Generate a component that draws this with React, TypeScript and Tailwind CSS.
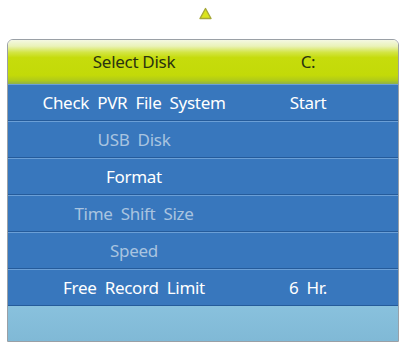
import React from "react";

type Row = { label: string; value?: string; dim?: boolean };

const rows: Row[] = [
  { label: "Check PVR File System", value: "Start" },
  { label: "USB Disk", dim: true },
  { label: "Format" },
  { label: "Time Shift Size", dim: true },
  { label: "Speed", dim: true },
  { label: "Free Record Limit", value: "6 Hr." },
];

function MenuRow({ label, value, dim }: Row) {
  return (
    <div className="flex h-[37px] items-center border-t border-t-[#6b9fd6] border-b border-b-[#255b9a] bg-[#3877bd]">
      <div
        className={`w-[252px] text-center ${dim ? "text-[#a9c4e0]" : "text-white"}`}
      >
        {label}
      </div>
      <div className="w-[96px] text-center text-white">{value}</div>
    </div>
  );
}

export default function App() {
  return (
    <div
      className="w-[406px] h-[345px] bg-white overflow-hidden text-[17px] tracking-[-0.3px] [word-spacing:4px]"
      style={{ fontFamily: '"Noto Sans", "Open Sans", sans-serif' }}
    >
      {/* up arrow */}
      <div className="flex h-[39px] justify-center pt-[7px] pl-[4px]">
        <svg width="13" height="13" viewBox="0 0 13 13">
          <path
            d="M6.5 1.5 L12 11.5 L1 11.5 Z"
            fill="#dbe41c"
            stroke="#a6a838"
            strokeWidth="1.4"
            strokeLinejoin="round"
          />
        </svg>
      </div>

      <div className="ml-[7px] w-[392px] rounded-t-[6px] border border-[#9aa0a6] overflow-hidden">
        <div className="flex h-[44px] items-center bg-[linear-gradient(to_bottom,#f4f8e2_0%,#eaf2b8_14%,#d3e545_28%,#c6dc0c_40%,#c3da08_80%,#b0ca1a_92%,#8db04c_100%)] text-[#2a3310] [word-spacing:0px]">
          <div className="w-[252px] text-center">Select Disk</div>
          <div className="w-[96px] text-center">C:</div>
        </div>
        {rows.map((r) => (
          <MenuRow key={r.label} {...r} />
        ))}
        <div className="h-[35px] bg-[linear-gradient(to_bottom,#89c1dd,#80b9d6)]" />
      </div>
    </div>
  );
}
